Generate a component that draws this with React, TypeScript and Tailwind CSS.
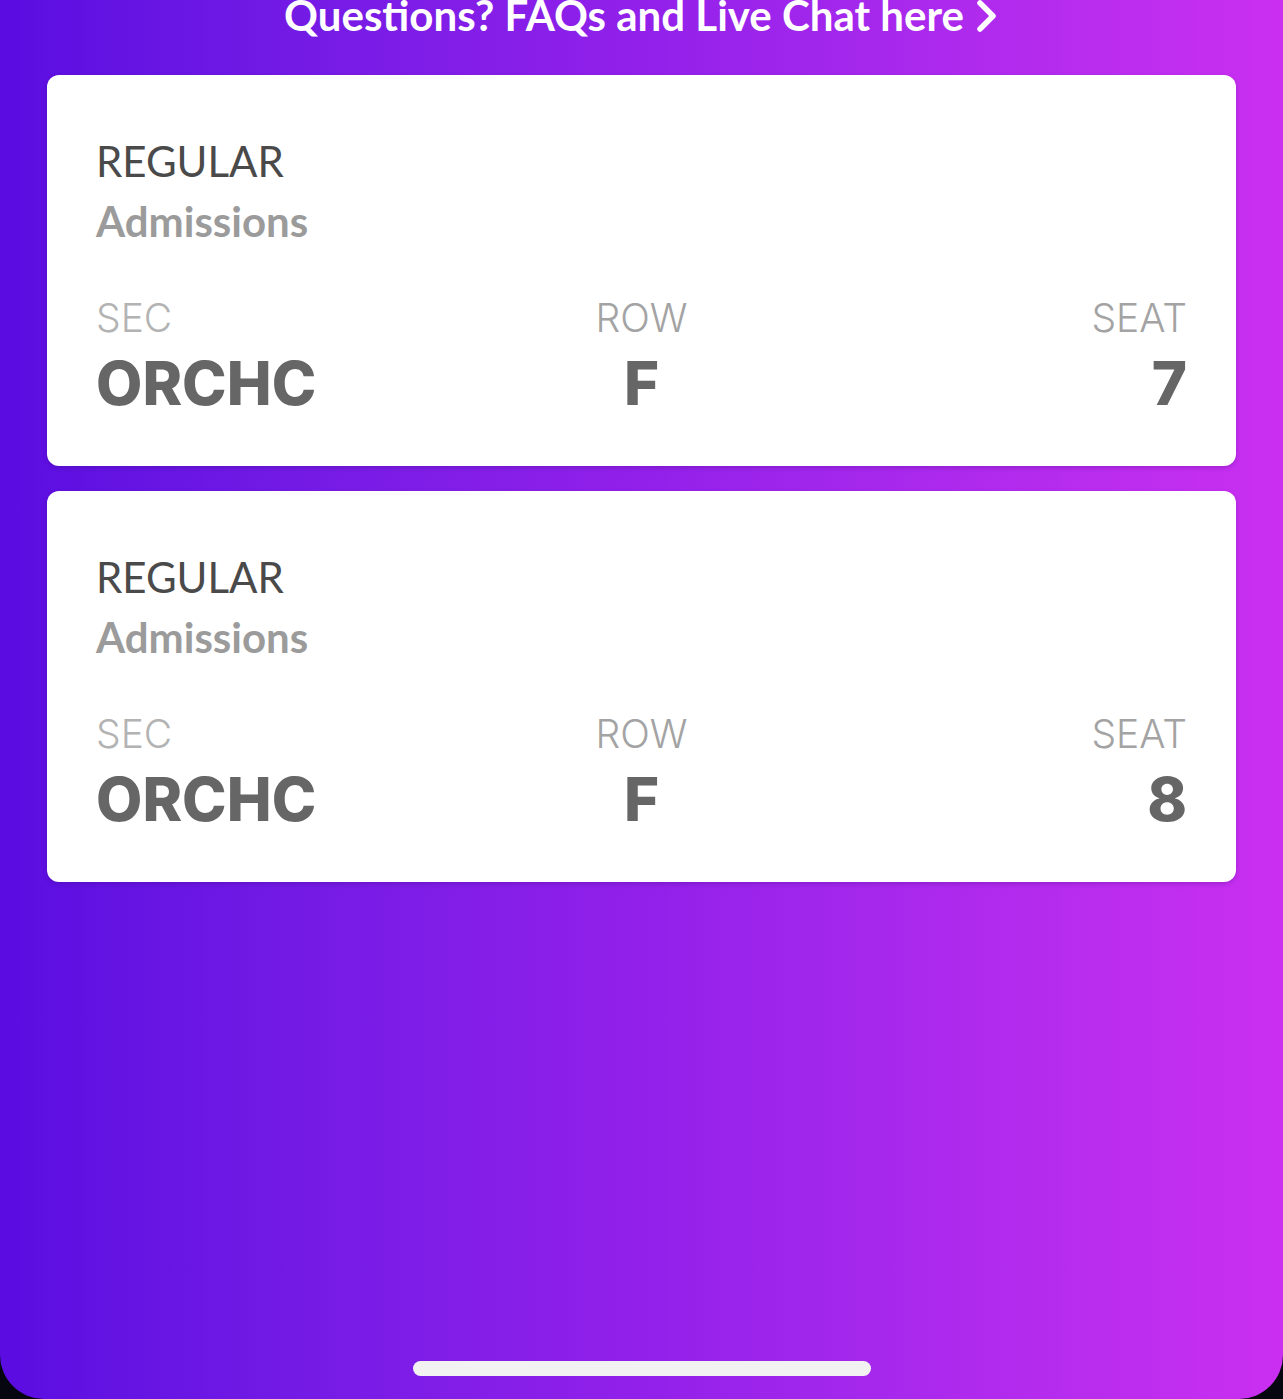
import React from "react";

type Ticket = {
    tier: string;
    kind: string;
    sec: string;
    row: string;
    seat: string;
};

const tickets: Ticket[] = [
    { tier: "REGULAR", kind: "Admissions", sec: "ORCHC", row: "F", seat: "7" },
    { tier: "REGULAR", kind: "Admissions", sec: "ORCHC", row: "F", seat: "8" },
];

function Chevron() {
    return (
        <svg width="24" height="36" viewBox="0 0 24 36" fill="none" className="ml-[11px] mt-[2px]">
            <path d="M5 5 L18 18 L5 31" stroke="white" strokeWidth="5.5" strokeLinecap="round" strokeLinejoin="round" />
        </svg>
    );
}

function TicketCard({ t }: { t: Ticket }) {
    return (
        <div className="bg-white rounded-[12px] shadow-[0_2px_4px_rgba(60,0,120,0.25)] pt-[56px] pb-[48px] px-[49px]">
            <div className="font-['Lato',sans-serif] text-[42px] leading-[60px]">
                <div className="text-[#4a4a4a] font-normal">{t.tier}</div>
                <div className="text-[#9b9b9b] font-bold">{t.kind}</div>
            </div>
            <div className="mt-[43px] grid grid-cols-3 font-['Inter',sans-serif]">
                <div className="text-left">
                    <div className="text-[39px] leading-[48px] font-light text-[#b3b3b3]">SEC</div>
                    <div className="mt-[6px] text-[60px] leading-[70px] font-extrabold text-[#666666]">{t.sec}</div>
                </div>
                <div className="text-center">
                    <div className="text-[39px] leading-[48px] font-light text-[#a3a3a3]">ROW</div>
                    <div className="mt-[6px] text-[60px] leading-[70px] font-extrabold text-[#666666]">{t.row}</div>
                </div>
                <div className="text-right">
                    <div className="text-[39px] leading-[48px] font-light text-[#a3a3a3]">SEAT</div>
                    <div className="mt-[6px] text-[60px] leading-[70px] font-extrabold text-[#666666]">{t.seat}</div>
                </div>
            </div>
        </div>
    );
}

export default function App() {
    return (
        <div className="min-h-[1399px] bg-[#05060f]">
            <div className="h-[1399px] rounded-b-[44px] bg-gradient-to-r from-[#5a0ce1] via-[#9220ea] to-[#ca2ff0] flex flex-col overflow-hidden">
                {/* Header link */}
                <div className="h-[75px] flex justify-center">
                    <div className="flex items-center h-[30px] font-['Lato',sans-serif] font-bold text-white text-[42px] leading-[30px]">
                        <span>Questions? FAQs and Live Chat here</span>
                        <Chevron />
                    </div>
                </div>

                {/* Tickets */}
                <div className="px-[47px] flex flex-col gap-[25px]">
                    {tickets.map((t, i) => (
                        <TicketCard key={i} t={t} />
                    ))}
                </div>

                <div className="flex-1" />

                {/* Home indicator */}
                <div className="flex justify-center mb-[23px]">
                    <div className="w-[458px] h-[15px] rounded-full bg-[#f2f2f2]" />
                </div>
            </div>
        </div>
    );
}
